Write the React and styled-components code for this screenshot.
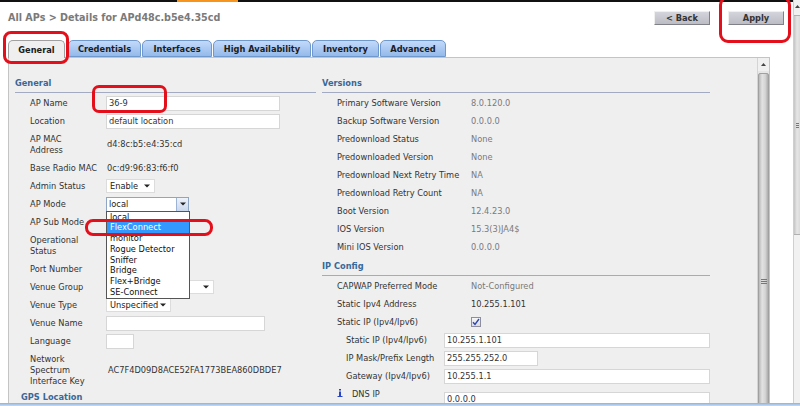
import React from 'react';
import styled, { createGlobalStyle } from 'styled-components';

const GlobalStyle = createGlobalStyle`
  html, body { margin: 0; padding: 0; background: #fff; }
  body { font-family: "DejaVu Sans", Verdana, sans-serif; font-size: 8.25px; color: #333; }
  * { box-sizing: border-box; }
`;

const Page = styled.div`
  position: relative;
  width: 800px;
  height: 406px;
  overflow: hidden;
  display: flex;
  flex-direction: column;
  background: #fff;
`;

const Body = styled.div`
  flex: 1;
  min-height: 0;
  display: flex;
`;

const Main = styled.div`
  flex: 1;
  min-width: 0;
  display: flex;
  flex-direction: column;
`;

const TopStrip = styled.div`
  height: 2px;
  display: flex;
  background: #111;
`;

const OrangeMark = styled.div`
  margin-left: 177px;
  width: 61px;
  background: #f7941d;
`;

const Header = styled.div`
  height: 38px;
  display: flex;
  align-items: flex-start;
  justify-content: space-between;
  padding: 0 9px 0 8px;
`;

const Title = styled.h1`
  margin: 10px 0 0;
  font-size: 9.6px;
  line-height: 11px;
  font-weight: bold;
  color: #7a7a7a;
`;

const ButtonGroup = styled.div`
  display: flex;
  gap: 18px;
  margin-top: 9px;
`;

const Button = styled.button`
  width: 56px;
  height: 14px;
  padding: 0;
  font: bold 8.25px/12px "DejaVu Sans", Verdana, sans-serif;
  color: #333;
  background: linear-gradient(#d4d4dc, #bcbcc5);
  border: 1px solid;
  border-color: #f0f0f0 #808088 #808088 #f0f0f0;
`;

const TabBar = styled.div`
  height: 17px;
  display: flex;
  align-items: flex-end;
  padding-left: 8px;
`;

const Tab = styled.div`
  width: ${p => p.$w}px;
  margin-right: ${p => p.$gap}px;
  height: ${p => (p.$active ? 18 : 17)}px;
  margin-bottom: ${p => (p.$active ? -1 : 0)}px;
  display: flex;
  align-items: center;
  justify-content: center;
  padding-top: 1px;
  font-weight: bold;
  font-size: 8.25px;
  color: #1c1c1c;
  border: 1px solid ${p => (p.$active ? '#a0a0a0' : '#6f98cd')};
  border-bottom: ${p => (p.$active ? 'none' : '1px solid #6f98cd')};
  border-radius: 5px 5px 0 0;
  background: ${p => (p.$active ? '#efefef' : 'linear-gradient(#c2dafa, #94b9ea)')};
  position: relative;
  z-index: ${p => (p.$active ? 2 : 1)};
`;

const Panel = styled.div`
  flex: 1;
  min-height: 0;
  width: 762px;
  margin-left: 8px;
  display: flex;
  background: #efefef;
  border: 1px solid #c4c4c4;
  border-bottom: none;
  overflow: hidden;
`;

const Content = styled.div`
  flex: 1;
  display: grid;
  grid-template-columns: 301px 388px;
  column-gap: 6px;
  align-content: start;
  padding: 19.5px 0 0 6px;
`;

const Column = styled.div`
  display: flex;
  flex-direction: column;
`;

const SectionTitle = styled.div`
  margin-top: ${p => p.$mt || 0}px;
  padding-left: ${p => p.$pl || 0}px;
  padding-bottom: 3px;
  line-height: 11px;
  font-weight: bold;
  color: #3a6897;
  border-bottom: ${p => (p.$noline ? 'none' : '1px solid #a3abc3')};
`;

const Rows = styled.div`
  padding-top: 1.5px;
  display: flex;
  flex-direction: column;
`;

const Row = styled.div`
  display: grid;
  grid-template-columns: ${p => p.$label}px 1fr;
  align-items: center;
  min-height: 18px;
  padding: ${p => (p.$multi ? '3.5px' : '0')} 0 ${p => (p.$multi ? '3.5px' : '0')} ${p => p.$indent}px;
  line-height: 11px;
`;

const Label = styled.div`
  color: #333;
  display: flex;
  align-items: flex-start;
  gap: 9px;
  min-height: ${p => (p.$lines ? p.$lines * 11 : 11)}px;
`;

const Value = styled.div`
  color: ${p => (p.$tone === 'muted' ? '#7a7a7a' : '#333')};
  padding-left: ${p => p.$pl || 0}px;
`;

const TextInput = styled.div`
  width: ${p => p.$w}px;
  height: 15px;
  background: #fff;
  border: 1px solid #d6d6d6;
  padding: 0 2px;
  line-height: 13px;
  color: #333;
  white-space: nowrap;
  overflow: hidden;
`;

const SelectBox = styled.div`
  position: relative;
  width: ${p => p.$w}px;
  height: 14px;
  background: #fff;
  border: 1px solid #dcdcdc;
  display: flex;
  align-items: center;
  justify-content: space-between;
  padding: 0 4px 0 3px;
  color: #222;
  line-height: 12px;
`;

const ComboBox = styled.div`
  position: relative;
  width: ${p => p.$w}px;
  height: 15px;
  background: #fff;
  border: 1px solid #8ea6c4;
  display: flex;
  align-items: stretch;
  color: #222;
`;

const ComboText = styled.div`
  flex: 1;
  padding-left: 2px;
  line-height: 13px;
`;

const ComboButton = styled.div`
  width: 12px;
  display: flex;
  align-items: center;
  justify-content: center;
  border-left: 1px solid #9db3d3;
  background: linear-gradient(#eef3fb, #c9d7ee);
`;

const OptionList = styled.div`
  position: absolute;
  left: -1px;
  top: 100%;
  width: 84px;
  background: #fff;
  border: 1px solid #555;
  z-index: 5;
`;

const Option = styled.div`
  height: 10.75px;
  line-height: 10.75px;
  padding-left: 3px;
  color: ${p => (p.$selected ? '#fff' : '#111')};
  background: ${p => (p.$selected ? '#3399ff' : 'transparent')};
  white-space: nowrap;
`;

const CheckBox = styled.div`
  width: 10px;
  height: 10px;
  border: 1px solid #8e8e9e;
  background: linear-gradient(#f6f6f6, #dcdce0);
  display: flex;
  align-items: center;
  justify-content: center;
`;

const InnerScroll = styled.div`
  width: 12px;
  display: flex;
  flex-direction: column;
  background: #e6e6e6;
  border-left: 1px solid #d4d4d4;
  overflow: hidden;
`;

const ScrollArrow = styled.div`
  height: 13px;
  flex-shrink: 0;
  display: flex;
  align-items: center;
  justify-content: center;
  background: #f0f0f0;
`;

const ScrollThumb = styled.div`
  margin-top: 2px;
  height: ${p => p.$h}px;
  flex-shrink: 0;
  display: flex;
  align-items: center;
  justify-content: center;
  background: linear-gradient(to right, #b8b8b8, #e2e2e2 35%, #d4d4d4 70%, #acacac);
  border: 1px solid #a0a0a0;
  border-radius: 2px;
`;

const PageScroll = styled.div`
  width: 7px;
  display: flex;
  flex-direction: column;
  background: #f1f1f1;
  border-left: 1px solid #cfcfcf;
`;

const PageThumb = styled.div`
  margin-top: 2px;
  height: 220px;
  display: flex;
  align-items: center;
  justify-content: flex-end;
  padding-right: 1px;
  background: linear-gradient(to right, #c4c4c4, #e6e6e6 50%, #dadada);
  border-top: 1px solid #b0b0b0;
  border-bottom: 1px solid #b0b0b0;
`;

const BottomBar = styled.div`
  height: 3px;
  flex-shrink: 0;
  background: linear-gradient(#8fb1dc, #c8dbf1);
`;

const Mark = styled.div`
  position: absolute;
  left: ${p => p.$x}px;
  top: ${p => p.$y}px;
  width: ${p => p.$w}px;
  height: ${p => p.$h}px;
  border: 3px solid #e3101b;
  border-radius: ${p => p.$r}px;
  pointer-events: none;
  z-index: 10;
`;

const Caret = () => (
  <svg width="6" height="4" viewBox="0 0 6 4"><path d="M0 0.5h6L3 3.5z" fill="#222" /></svg>
);

const UpArrow = () => (
  <svg width="5" height="3" viewBox="0 0 5 3"><path d="M0 3h5L2.5 0z" fill="#444" /></svg>
);

const Grip = ({ w = 6 }) => (
  <svg width={w} height="5" viewBox={`0 0 ${w} 5`}>
    <path d={`M0 0.5h${w}M0 2.5h${w}M0 4.5h${w}`} stroke="#777" strokeWidth="1" />
  </svg>
);

const InfoIcon = () => (
  <svg width="6" height="8" viewBox="0 0 6 8">
    <path d="M2 0h2v1.5H2z M2 2.5h2V7H2z M0.5 7h5v1h-5z" fill="#2544c8" />
  </svg>
);

const CheckMark = () => (
  <svg width="8" height="8" viewBox="0 0 8 8">
    <path d="M1 4.2l2 2.3L7 1" fill="none" stroke="#2a47b3" strokeWidth="1.4" />
  </svg>
);

const modes = ['local', 'FlexConnect', 'monitor', 'Rogue Detector', 'Sniffer', 'Bridge', 'Flex+Bridge', 'SE-Connect'];

const tabs = [
  { name: 'General', w: 57, gap: 3, active: true },
  { name: 'Credentials', w: 73, gap: 1 },
  { name: 'Interfaces', w: 70, gap: 1 },
  { name: 'High Availability', w: 98, gap: 1 },
  { name: 'Inventory', w: 67, gap: 1 },
  { name: 'Advanced', w: 66, gap: 0 },
];

const versions = [
  ['Primary Software Version', '8.0.120.0'],
  ['Backup Software Version', '0.0.0.0'],
  ['Predownload Status', 'None'],
  ['Predownloaded Version', 'None'],
  ['Predownload Next Retry Time', 'NA'],
  ['Predownload Retry Count', 'NA'],
  ['Boot Version', '12.4.23.0'],
  ['IOS Version', '15.3(3)JA4$'],
  ['Mini IOS Version', '0.0.0.0'],
];

const L = { $label: 76, $indent: 15 };
const R = { $label: 134, $indent: 15 };
const S = { $label: 98, $indent: 24 };

export default function App() {
  return (
    <>
      <GlobalStyle />
      <Page>
        <Body>
          <Main>
            <TopStrip><OrangeMark /></TopStrip>
            <Header>
              <Title>All APs &gt; Details for APd48c.b5e4.35cd</Title>
              <ButtonGroup>
                <Button>&lt; Back</Button>
                <Button>Apply</Button>
              </ButtonGroup>
            </Header>
            <TabBar>
              {tabs.map(t => (
                <Tab key={t.name} $w={t.w} $gap={t.gap} $active={t.active}>{t.name}</Tab>
              ))}
            </TabBar>
            <Panel>
              <Content>
                <Column>
                  <SectionTitle>General</SectionTitle>
                  <Rows>
                    <Row {...L}><Label>AP Name</Label><TextInput $w={174}>36-9</TextInput></Row>
                    <Row {...L}><Label>Location</Label><TextInput $w={174}>default location</TextInput></Row>
                    <Row {...L} $multi><Label>AP MAC<br />Address</Label><Value $pl={1}>d4:8c:b5:e4:35:cd</Value></Row>
                    <Row {...L}><Label>Base Radio MAC</Label><Value $pl={1}>0c:d9:96:83:f6:f0</Value></Row>
                    <Row {...L}><Label>Admin Status</Label><SelectBox $w={49}><span>Enable</span><Caret /></SelectBox></Row>
                    <Row {...L}>
                      <Label>AP Mode</Label>
                      <div>
                        <ComboBox $w={83}>
                          <ComboText>local</ComboText>
                          <ComboButton><Caret /></ComboButton>
                          <OptionList>
                            {modes.map(m => (
                              <Option key={m} $selected={m === 'FlexConnect'}>{m}</Option>
                            ))}
                          </OptionList>
                        </ComboBox>
                      </div>
                    </Row>
                    <Row {...L}><Label>AP Sub Mode</Label><div /></Row>
                    <Row {...L} $multi><Label>Operational<br />Status</Label><div /></Row>
                    <Row {...L}><Label>Port Number</Label><div /></Row>
                    <Row {...L}><Label>Venue Group</Label><SelectBox $w={108}><span /><Caret /></SelectBox></Row>
                    <Row {...L}><Label>Venue Type</Label><SelectBox $w={65}><span>Unspecified</span><Caret /></SelectBox></Row>
                    <Row {...L}><Label>Venue Name</Label><TextInput $w={159} /></Row>
                    <Row {...L}><Label>Language</Label><TextInput $w={28} /></Row>
                    <Row {...L} $multi><Label>Network<br />Spectrum<br />Interface Key</Label><Value $pl={2}>AC7F4D09D8ACE52FA1773BEA860DBDE7</Value></Row>
                  </Rows>
                  <SectionTitle $mt={2} $pl={6} $noline>GPS Location</SectionTitle>
                </Column>
                <Column>
                  <SectionTitle>Versions</SectionTitle>
                  <Rows>
                    {versions.map(([k, v]) => (
                      <Row key={k} {...R}><Label>{k}</Label><Value $tone="muted">{v}</Value></Row>
                    ))}
                  </Rows>
                  <SectionTitle $mt={4.5}>IP Config</SectionTitle>
                  <Rows>
                    <Row {...R}><Label>CAPWAP Preferred Mode</Label><Value $tone="muted">Not-Configured</Value></Row>
                    <Row {...R}><Label>Static Ipv4 Address</Label><Value>10.255.1.101</Value></Row>
                    <Row {...R}><Label>Static IP (Ipv4/Ipv6)</Label><CheckBox><CheckMark /></CheckBox></Row>
                    <Row {...S}><Label>Static IP (Ipv4/Ipv6)</Label><TextInput $w={266}>10.255.1.101</TextInput></Row>
                    <Row {...S}><Label>IP Mask/Prefix Length</Label><TextInput $w={94}>255.255.252.0</TextInput></Row>
                    <Row {...S}><Label>Gateway (Ipv4/Ipv6)</Label><TextInput $w={266}>10.255.1.1</TextInput></Row>
                    <Row $label={107} $indent={15} $multi>
                      <Label $lines={2}><InfoIcon /><span>DNS IP</span></Label>
                      <TextInput $w={266}>0.0.0.0</TextInput>
                    </Row>
                  </Rows>
                </Column>
              </Content>
              <InnerScroll>
                <ScrollArrow><UpArrow /></ScrollArrow>
                <ScrollThumb $h={416}><Grip /></ScrollThumb>
              </InnerScroll>
            </Panel>
          </Main>
          <PageScroll>
            <ScrollArrow><UpArrow /></ScrollArrow>
            <PageThumb><Grip w={3} /></PageThumb>
          </PageScroll>
        </Body>
        <BottomBar />
        <Mark $x={3} $y={31} $w={66} $h={33} $r={8} />
        <Mark $x={719} $y={-4} $w={72} $h={47} $r={9} />
        <Mark $x={92} $y={85} $w={75} $h={28} $r={7} />
        <Mark $x={85} $y={219} $w={128} $h={17} $r={8} />
      </Page>
    </>
  );
}
